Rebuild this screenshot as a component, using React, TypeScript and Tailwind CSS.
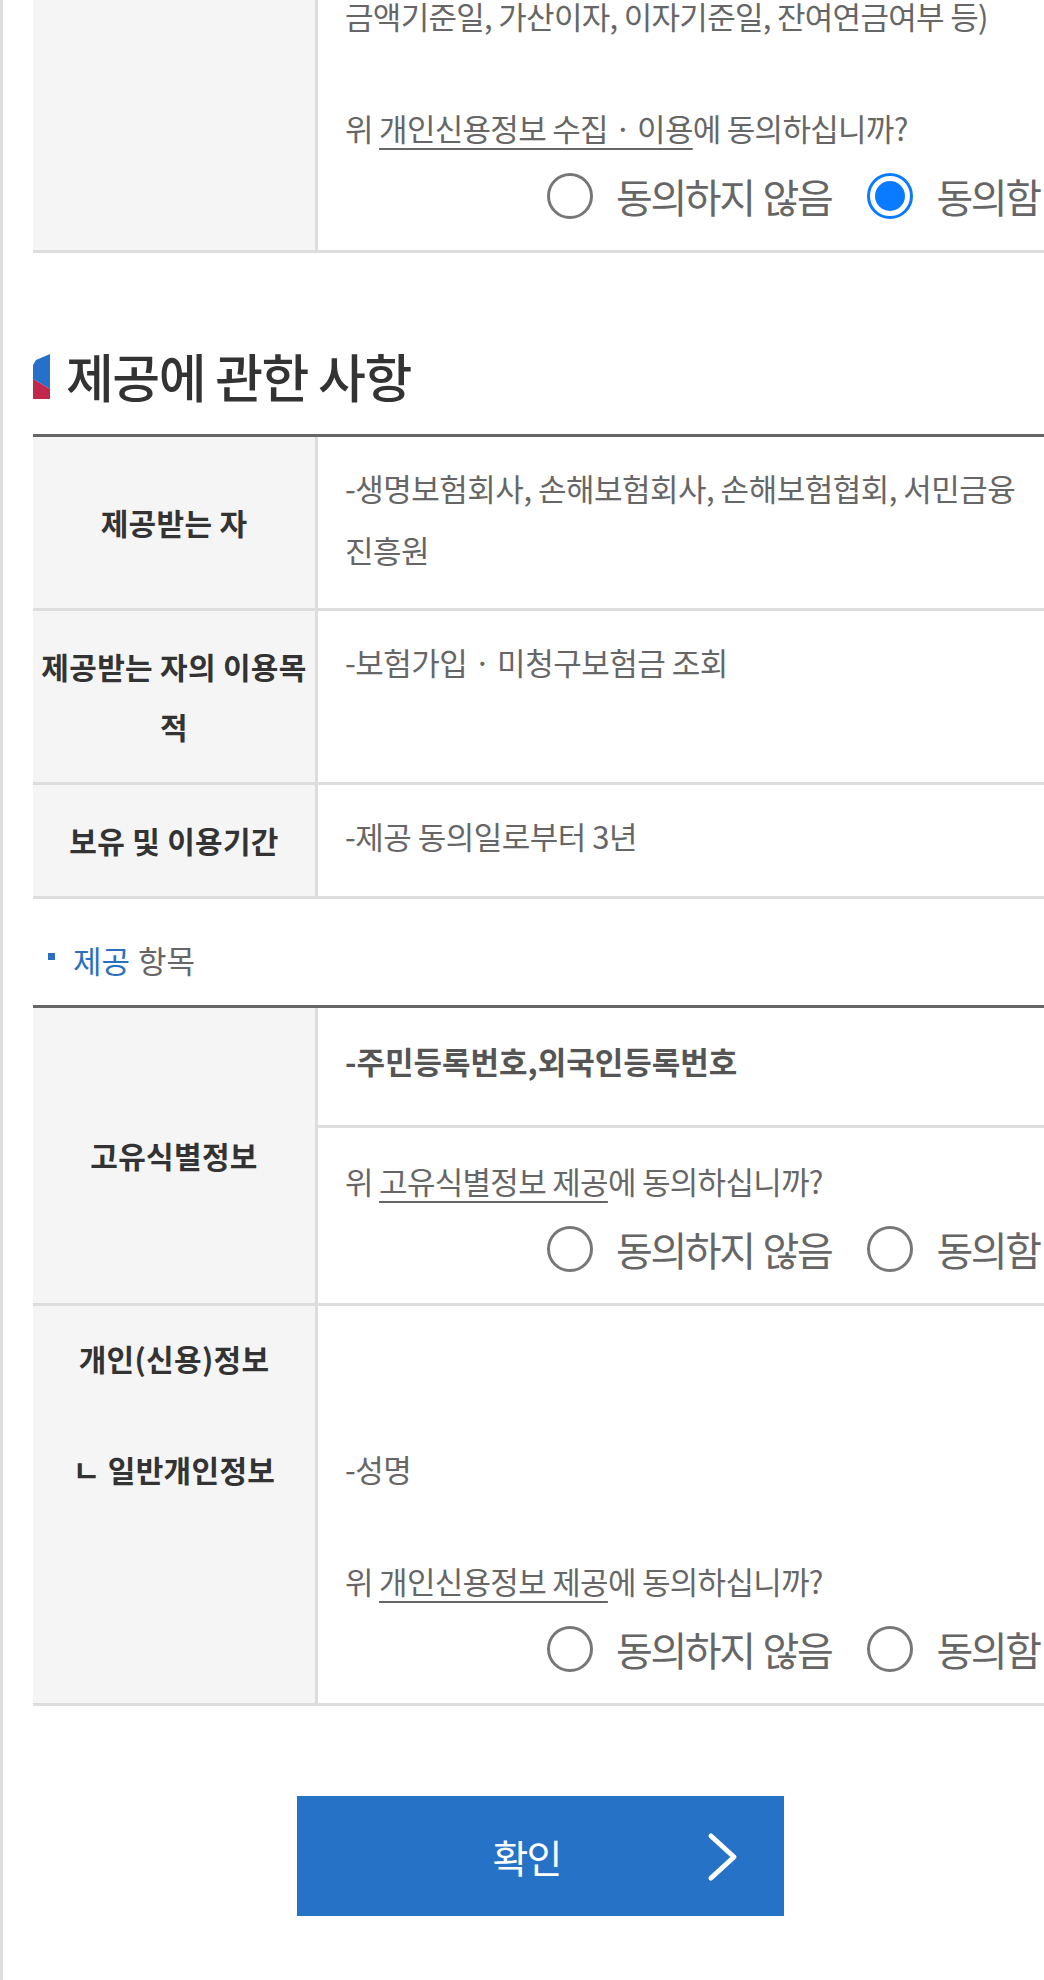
import type { ReactNode } from "react";

interface RadioProps {
  label: ReactNode;
  checked?: boolean;
}

function Radio({ label, checked }: RadioProps) {
  return (
    <span className="flex items-center gap-[23px]">
      {checked ? (
        <span className="flex h-[46px] w-[46px] shrink-0 items-center justify-center rounded-full border-[3px] border-[#0a7aff]">
          <span className="h-[30px] w-[30px] rounded-full bg-[#0a7aff]" />
        </span>
      ) : (
        <span className="h-[46px] w-[46px] shrink-0 rounded-full border-[3px] border-[#777]" />
      )}
      <span className="flex whitespace-nowrap text-[40px] leading-none tracking-[-2.4px] text-[#666]">
        {label}
      </span>
    </span>
  );
}

interface ConsentProps {
  target: string;
  agreed?: boolean;
}

function Consent({ target, agreed }: ConsentProps) {
  return (
    <div>
      <p className="whitespace-nowrap text-[31px] leading-[62px] tracking-[-0.7px] text-[#666]">
        위{" "}
        <span className="underline decoration-2 underline-offset-[7px]">{target}</span>
        에 동의하십니까?
      </p>
      <div className="mt-[10px] flex h-[54px] items-center gap-[36px] pl-[202px]">
        <Radio
          label={
            <>
              <span>동의하지</span>
              <span className="ml-[9px]">않음</span>
            </>
          }
        />
        <Radio label="동의함" checked={agreed} />
      </div>
    </div>
  );
}

function LabelCell({ children }: { children: ReactNode }) {
  return (
    <div className="flex items-center justify-center border-r-[3px] border-[#ddd] bg-[#f5f5f5] pb-[26px] pt-[25px] text-center text-[30px] font-bold leading-[60px] tracking-[0.3px] text-[#333]">
      <div>{children}</div>
    </div>
  );
}

const cellText = "text-[31px] leading-[62px] tracking-[-0.5px] text-[#666]";

export default function App() {
  return (
    <div className="min-h-[1980px] w-[1044px] overflow-hidden border-l-[3px] border-[#ddd] bg-white pl-[30px] font-['Noto_Sans_CJK_KR','Noto_Sans',sans-serif]">
      <div className="w-[1015px]">
        {/* tail of the collection table */}
        <div className="grid grid-cols-[285px_1fr] border-b-[3px] border-[#ddd]">
          <div className="border-r-[3px] border-[#ddd] bg-[#f5f5f5]" />
          <div className="pb-[27px] pl-[27px]">
            <p className="whitespace-nowrap text-[31px] leading-[32px] tracking-[-0.7px] text-[#666]">
              금액기준일, 가산이자, 이자기준일, 잔여연금여부 등)
            </p>
            <div className="mt-[65px]">
              <Consent target="개인신용정보 수집 · 이용" agreed />
            </div>
          </div>
        </div>

        <div className="mt-[93px] flex h-[60px] items-center gap-[16px]">
          <svg width="17" height="45" viewBox="0 0 17 45" className="shrink-0">
            <polygon points="0,11 3,6 17,0 17,35 0,25" fill="#2670c9" />
            <polygon points="0,25 17,35 17,45 0,45" fill="#c1284b" />
          </svg>
          <h2 className="whitespace-nowrap text-[52px] font-medium leading-[60px] tracking-[-1.5px] text-[#333]">
            제공에 관한 사항
          </h2>
        </div>

        <div className="mt-[28px] border-t-[3px] border-[#666]">
          <div className="grid grid-cols-[285px_1fr] border-b-[3px] border-[#ddd]">
            <LabelCell>제공받는 자</LabelCell>
            <div className={`${cellText} whitespace-nowrap px-[27px] pb-[27px] pt-[20px]`}>
              -생명보험회사, 손해보험회사, 손해보험협회, 서민금융
              <br />
              진흥원
            </div>
          </div>
          <div className="grid grid-cols-[285px_1fr] border-b-[3px] border-[#ddd]">
            <LabelCell>
              <span className="whitespace-nowrap">제공받는 자의 이용목</span>
              <br />적
            </LabelCell>
            <div className={`${cellText} px-[27px] pb-[27px] pt-[20px]`}>
              -보험가입 · 미청구보험금 조회
            </div>
          </div>
          <div className="grid grid-cols-[285px_1fr] border-b-[3px] border-[#ddd]">
            <LabelCell>보유 및 이용기간</LabelCell>
            <div className={`${cellText} px-[27px] pb-[29px] pt-[20px]`}>
              -제공 동의일로부터 3년
            </div>
          </div>
        </div>

        <div className="mt-[31px] flex h-[60px] items-center text-[31px] tracking-[0px]">
          <span className="mb-[8px] ml-[15px] mr-[18px] h-[7px] w-[7px] bg-[#2c6fc1]" />
          <span className="text-[#2c6fc1]">제공</span>
          <span className="ml-[8px] text-[#666]">항목</span>
        </div>

        <div className="mt-[15px] border-t-[3px] border-[#666]">
          <div className="grid grid-cols-[285px_1fr] border-b-[3px] border-[#ddd]">
            <LabelCell>고유식별정보</LabelCell>
            <div>
              <div className="border-b-[3px] border-[#ddd] px-[27px] pb-[33px] pt-[22px] text-[31px] font-bold leading-[62px] tracking-[0px] text-[#555]">
                -주민등록번호,외국인등록번호
              </div>
              <div className="pb-[27px] pl-[27px] pt-[22px]">
                <Consent target="고유식별정보 제공" />
              </div>
            </div>
          </div>
          <div className="grid grid-cols-[285px_1fr] border-b-[3px] border-[#ddd]">
            <div className="flex flex-col items-center border-r-[3px] border-[#ddd] bg-[#f5f5f5] pt-[22px] text-[30px] font-bold leading-[60px] tracking-[0.3px] text-[#333]">
              <span>개인(신용)정보</span>
              <span className="mt-[51px]">ㄴ 일반개인정보</span>
            </div>
            <div className="pb-[27px] pl-[27px] pt-[132px]">
              <p className={cellText}>-성명</p>
              <div className="mt-[50px]">
                <Consent target="개인신용정보 제공" />
              </div>
            </div>
          </div>
        </div>

        <div className="mt-[90px] flex justify-center pb-[65px]">
          <button className="relative flex h-[120px] w-[487px] items-center justify-center bg-[#2672c7] pr-[28px] text-[39px] tracking-[-2px] text-white">
            확인
            <svg
              className="absolute right-[46px] top-[36px]"
              width="31"
              height="50"
              viewBox="0 0 31 50"
            >
              <polyline
                points="4,4 27,25 4,46"
                fill="none"
                stroke="white"
                strokeWidth="5"
                strokeLinecap="round"
                strokeLinejoin="round"
              />
            </svg>
          </button>
        </div>
      </div>
    </div>
  );
}
